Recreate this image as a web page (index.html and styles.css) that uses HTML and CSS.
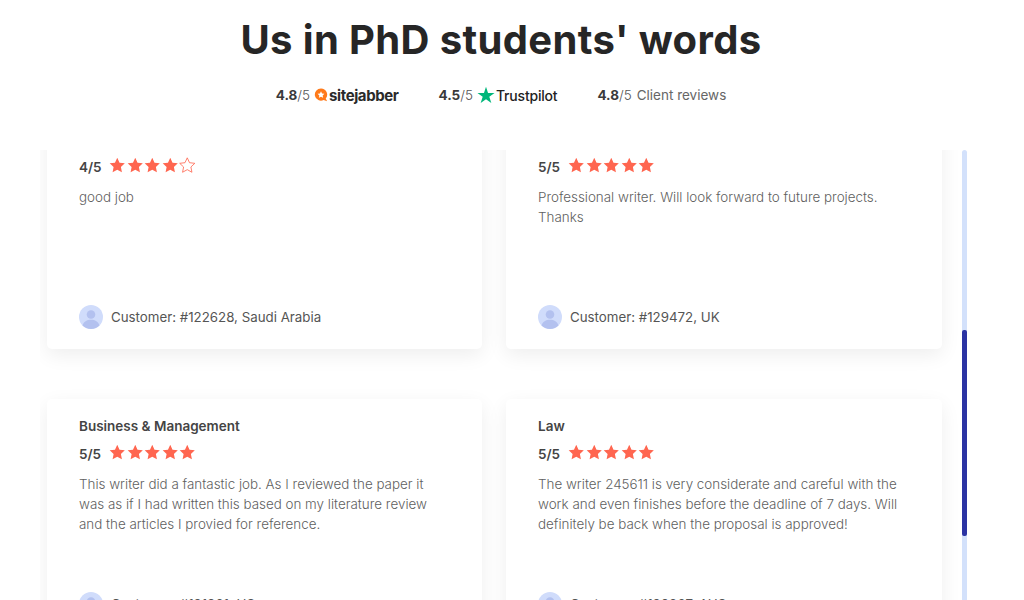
FILE: index.html
```html
<!DOCTYPE html>
<html lang="en">
<head>
<meta charset="utf-8">
<title>Us in PhD students' words</title>
<link rel="stylesheet" href="styles.css">
</head>
<body>
<svg class="defs" width="0" height="0" aria-hidden="true">
  <symbol id="star" viewBox="0 0 24 24"><path d="M12 1.2l3.3 7.1 7.7.9-5.700 5.300 1.500 7.700L12 18.400l-6.800 3.800 1.500-7.700L1 9.200l7.700-.9z"/></symbol>
</svg>
<header class="head">
  <h1 class="title">Us in PhD students' words</h1>
  <div class="stats">
    <div class="stat"><b>4.8</b><span class="of">/5</span>
      <svg class="sj-icon" viewBox="0 0 16 16"><path fill="#ff7a1a" d="M8 .5a7 7 0 0 1 5.400 11.500l1.600 3.200-4-1.400A7 7 0 1 1 8 .5z"/><path fill="#fff" d="M8 3.800l1.200 2.500 2.700.3-2 1.900.5 2.700L8 9.900l-2.400 1.300.5-2.700-2-1.900 2.700-.3z"/></svg>
      <span class="sj">sitejabber</span></div>
    <div class="stat"><b>4.5</b><span class="of">/5</span>
      <svg class="tp-icon" viewBox="0 0 24 24"><path fill="#00b67a" d="M12 1l2.700 8.300h8.700l-7 5.100 2.700 8.300-7.100-5.100-7.100 5.100 2.700-8.300-7-5.100h8.700z"/></svg>
      <span class="tp">Trustpilot</span></div>
    <div class="stat"><b>4.8</b><span class="of">/5</span><span class="cr">Client reviews</span></div>
  </div>
</header>
<main class="scroller">
  <div class="viewport">
    <div class="grid">
      <article class="card">
        <div class="subject"></div>
        <div class="rating"><b>4/5</b>
          <span class="stars">
            <svg class="st"><use href="#star"/></svg><svg class="st"><use href="#star"/></svg><svg class="st"><use href="#star"/></svg><svg class="st"><use href="#star"/></svg><svg class="st empty"><use href="#star"/></svg>
          </span></div>
        <p class="text">good job</p>
        <div class="who"><svg class="avatar" viewBox="0 0 24 24"><circle cx="12" cy="12" r="12" fill="#d0dcfb"/><circle cx="12" cy="9.500" r="4.300" fill="#b3c1ef"/><path fill="#b3c1ef" d="M3.500 20.500c1-4 4.500-5.800 8.500-5.800s7.500 1.800 8.500 5.800A12 12 0 0 1 12 24a12 12 0 0 1-8.500-3.500z"/></svg><span>Customer: #122628, Saudi Arabia</span></div>
      </article>
      <article class="card">
        <div class="subject"></div>
        <div class="rating"><b>5/5</b>
          <span class="stars">
            <svg class="st"><use href="#star"/></svg><svg class="st"><use href="#star"/></svg><svg class="st"><use href="#star"/></svg><svg class="st"><use href="#star"/></svg><svg class="st"><use href="#star"/></svg>
          </span></div>
        <p class="text">Professional writer. Will look forward to future projects.<br>Thanks</p>
        <div class="who"><svg class="avatar" viewBox="0 0 24 24"><circle cx="12" cy="12" r="12" fill="#d0dcfb"/><circle cx="12" cy="9.500" r="4.300" fill="#b3c1ef"/><path fill="#b3c1ef" d="M3.500 20.500c1-4 4.500-5.800 8.500-5.800s7.500 1.800 8.500 5.800A12 12 0 0 1 12 24a12 12 0 0 1-8.500-3.500z"/></svg><span>Customer: #129472, UK</span></div>
      </article>
      <article class="card">
        <h2 class="subject">Business &amp; Management</h2>
        <div class="rating"><b>5/5</b>
          <span class="stars">
            <svg class="st"><use href="#star"/></svg><svg class="st"><use href="#star"/></svg><svg class="st"><use href="#star"/></svg><svg class="st"><use href="#star"/></svg><svg class="st"><use href="#star"/></svg>
          </span></div>
        <p class="text">This writer did a fantastic job. As I reviewed the paper it<br>was as if I had written this based on my literature review<br>and the articles I provied for reference.</p>
        <div class="who"><svg class="avatar" viewBox="0 0 24 24"><circle cx="12" cy="12" r="12" fill="#d0dcfb"/><circle cx="12" cy="9.500" r="4.300" fill="#b3c1ef"/><path fill="#b3c1ef" d="M3.500 20.500c1-4 4.500-5.800 8.500-5.800s7.500 1.800 8.500 5.800A12 12 0 0 1 12 24a12 12 0 0 1-8.500-3.500z"/></svg><span>Customer: #121361, US</span></div>
      </article>
      <article class="card">
        <h2 class="subject">Law</h2>
        <div class="rating"><b>5/5</b>
          <span class="stars">
            <svg class="st"><use href="#star"/></svg><svg class="st"><use href="#star"/></svg><svg class="st"><use href="#star"/></svg><svg class="st"><use href="#star"/></svg><svg class="st"><use href="#star"/></svg>
          </span></div>
        <p class="text">The writer 245611 is very considerate and careful with the<br>work and even finishes before the deadline of 7 days. Will<br>definitely be back when the proposal is approved!</p>
        <div class="who"><svg class="avatar" viewBox="0 0 24 24"><circle cx="12" cy="12" r="12" fill="#d0dcfb"/><circle cx="12" cy="9.500" r="4.300" fill="#b3c1ef"/><path fill="#b3c1ef" d="M3.500 20.500c1-4 4.500-5.800 8.500-5.800s7.500 1.800 8.500 5.800A12 12 0 0 1 12 24a12 12 0 0 1-8.500-3.500z"/></svg><span>Customer: #120267, AUS</span></div>
      </article>
    </div>
  </div>
  <div class="bar"><div class="thumb"></div></div>
</main>
</body>
</html>
```
FILE: styles.css
```css
* { box-sizing: border-box; }
html, body { margin: 0; height: 600px; overflow: hidden; background: #fff; }
body { font-family: Inter, "Open Sans", sans-serif; color: #444; }
.defs { display: block; height: 0; }

.head { width: 1002px; height: 150px; padding-top: 14px; display: flex; flex-direction: column; align-items: center; }
.title { margin: 0; font-size: 40px; line-height: 52px; font-weight: 700; color: #262626; letter-spacing: .37px; }
.stats { margin-top: 17px; display: flex; gap: 40px; height: 24px; align-items: center; font-size: 13.500px; color: #555; }
.stat { display: flex; align-items: center; }
.stat b { font-weight: 700; color: #3a3a3a; }
.of { font-weight: 300; }
.sj-icon { width: 14px; height: 14px; margin-left: 4px; }
.sj { margin-left: 1px; font-size: 15px; font-weight: 700; color: #2a2a2a; letter-spacing: -.4px; }
.tp-icon { width: 18px; height: 18px; margin-left: 4px; }
.tp { margin-left: 1px; font-size: 14px; font-weight: 500; color: #222; letter-spacing: -.2px; }
.cr { margin-left: 5px; font-weight: 400; color: #666; }

.scroller { display: flex; height: 450px; padding-left: 40px; width: 967px; }
.viewport { flex: 1; overflow: hidden; padding-left: 7px; }
.grid { margin-top: -38px; display: grid; grid-template-columns: 435px 436px; column-gap: 24px; row-gap: 50px; }
.card { height: 237px; padding: 16px 32px 0; border-radius: 5px; background: #fff; box-shadow: 0 6px 20px rgba(0,0,0,.07); display: flex; flex-direction: column; }
.subject { margin: 0; height: 22px; font-size: 13.500px; line-height: 22px; font-weight: 600; color: #444; }
.rating { margin-top: 6px; display: flex; align-items: center; height: 22px; font-size: 13.500px; }
.rating b { font-weight: 600; color: #444; width: 30px; }
.stars { display: flex; gap: 1px; margin-top: -3px; }
.st { width: 16.500px; height: 16.500px; fill: #ff6650; }
.st.empty { fill: #fff; stroke: #ff6650; stroke-width: 1.200px; }
.text { margin: 9px 0 0; font-size: 13.400px; line-height: 20px; font-weight: 300; color: #5f5f5f; flex: 1; }
.who { margin-bottom: 20px; display: flex; align-items: center; gap: 8px; font-size: 13.300px; color: #555; }
.avatar { width: 24px; height: 24px; flex: none; }

.bar { width: 5px; flex: none; height: 450px; background: #d3e1fb; border-radius: 3px 3px 0 0; }
.thumb { margin-top: 180px; height: 206px; background: #2b33a3; border-radius: 2px; }
```
